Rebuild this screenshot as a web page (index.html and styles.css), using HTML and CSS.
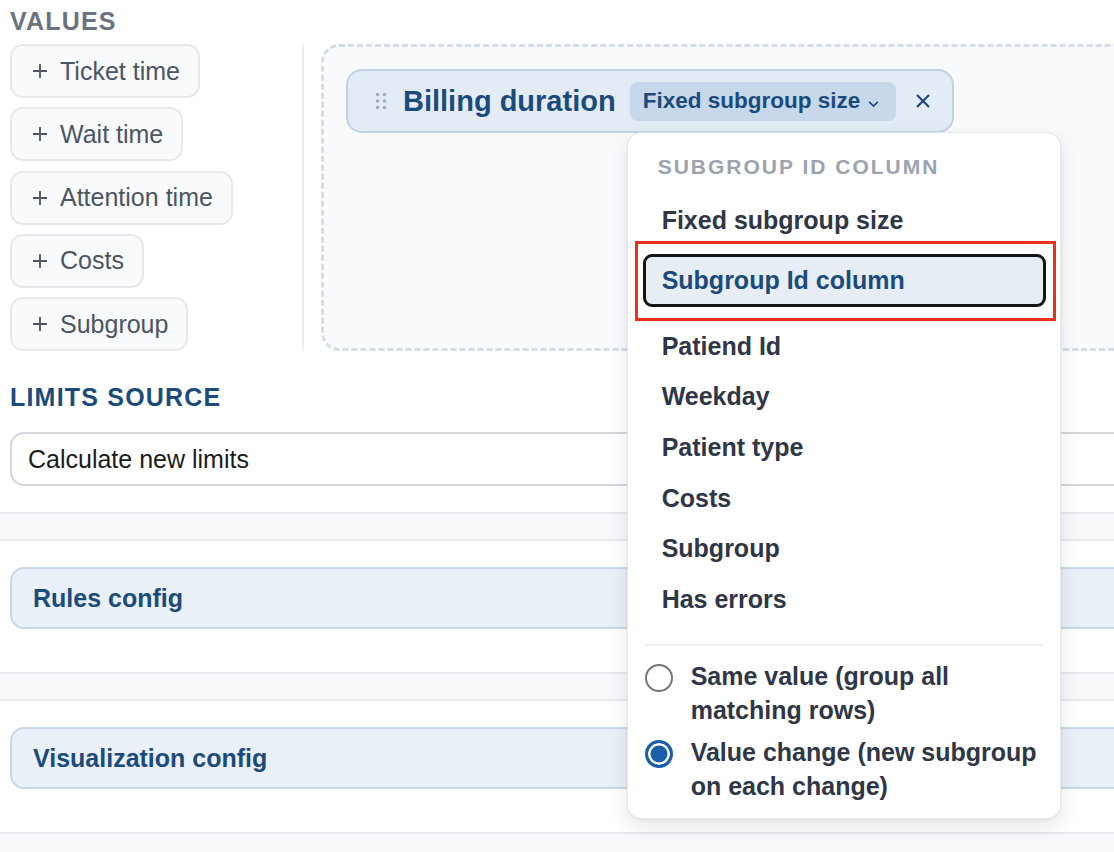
FILE: index.html
```html
<!DOCTYPE html>
<html lang="en">
<head>
    <meta charset="UTF-8">
    <meta name="viewport" content="width=device-width, initial-scale=1.0">
    <title>Chart config</title>
    <link rel="stylesheet" href="styles.css">
</head>
<body>
    <div class="page">
        <section class="panel panel-main">
            <h2 class="section-label">Values</h2>
            <div class="values-body">
                <div class="field-list">
                    <button class="field-btn"><svg viewBox="0 0 16 16"><path d="M8 1v14M1 8h14"/></svg>Ticket time</button>
                    <button class="field-btn"><svg viewBox="0 0 16 16"><path d="M8 1v14M1 8h14"/></svg>Wait time</button>
                    <button class="field-btn"><svg viewBox="0 0 16 16"><path d="M8 1v14M1 8h14"/></svg>Attention time</button>
                    <button class="field-btn"><svg viewBox="0 0 16 16"><path d="M8 1v14M1 8h14"/></svg>Costs</button>
                    <button class="field-btn"><svg viewBox="0 0 16 16"><path d="M8 1v14M1 8h14"/></svg>Subgroup</button>
                </div>
                <div class="divider"></div>
                <div class="dropzone">
                    <div class="value-chip">
                        <svg class="drag-handle" viewBox="0 0 12 18">
                            <circle cx="2.5" cy="2.5" r="1.8"/><circle cx="9.5" cy="2.5" r="1.8"/>
                            <circle cx="2.5" cy="9" r="1.8"/><circle cx="9.5" cy="9" r="1.8"/>
                            <circle cx="2.5" cy="15.5" r="1.8"/><circle cx="9.5" cy="15.5" r="1.8"/>
                        </svg>
                        <span class="value-name">Billing duration</span>
                        <div class="mode-select">
                            <button class="mode-btn">Fixed subgroup size <svg viewBox="0 0 12 7"><path d="M1 1l5 5 5-5"/></svg></button>
                            <div class="menu">
                                <div class="menu-header">SUBGROUP ID COLUMN</div>
                                <div class="menu-item">Fixed subgroup size</div>
                                <div class="focus-mark">
                                    <div class="menu-item focused">Subgroup Id column</div>
                                </div>
                                <div class="menu-item">Patiend Id</div>
                                <div class="menu-item">Weekday</div>
                                <div class="menu-item">Patient type</div>
                                <div class="menu-item">Costs</div>
                                <div class="menu-item">Subgroup</div>
                                <div class="menu-item">Has errors</div>
                                <div class="menu-divider"></div>
                                <div class="radio-group">
                                    <label class="radio-option"><span class="radio"></span><span>Same value (group all matching rows)</span></label>
                                    <label class="radio-option"><span class="radio checked"></span><span>Value change (new subgroup on each change)</span></label>
                                </div>
                            </div>
                        </div>
                        <button class="remove-btn"><svg viewBox="0 0 16 16"><path d="M2 2l12 12M14 2L2 14"/></svg></button>
                    </div>
                </div>
            </div>
            <h2 class="section-label limits">Limits source</h2>
            <div class="select-box">Calculate new limits</div>
        </section>
        <section class="panel">
            <div class="config-card">Rules config</div>
        </section>
        <section class="panel">
            <div class="config-card">Visualization config</div>
        </section>
    </div>
</body>
</html>
```

FILE: styles.css
```css
* {
    box-sizing: border-box;
}
html, body {
    margin: 0;
}
body {
    font-family: "Liberation Sans", Arial, sans-serif;
    background: #f8f9fb;
    height: 852px;
    overflow: hidden;
}
.page {
    width: 1160px;
}
.panel {
    background: #fff;
    border-bottom: 2px solid #e6e8ec;
    padding: 0 10px;
}
.panel + .panel {
    margin-top: 25px;
    border-top: 2px solid #e6e8ec;
    padding-top: 26px;
    padding-bottom: 43px;
}
.panel-main {
    position: relative;
    z-index: 2;
    padding-top: 7px;
    padding-bottom: 26px;
}
.section-label {
    margin: 0;
    font-size: 25px;
    line-height: 28px;
    font-weight: 700;
    letter-spacing: 1.2px;
    text-transform: uppercase;
    color: #6b7280;
}
.section-label.limits {
    margin-top: 32px;
    color: #1b4b7d;
}
.values-body {
    display: flex;
    margin-top: 9px;
}
.field-list {
    width: 280px;
    display: flex;
    flex-direction: column;
    align-items: flex-start;
    gap: 9.25px;
}
.field-btn {
    display: inline-flex;
    align-items: center;
    height: 54px;
    padding: 0 18px 0 20px;
    border: 2px solid #e6e8eb;
    border-radius: 13px;
    background: #f9fafb;
    color: #4b5563;
    font-family: inherit;
    font-size: 25px;
}
.field-btn svg {
    width: 16px;
    height: 16px;
    margin-right: 12px;
    stroke: #4b5563;
    stroke-width: 1.8;
    fill: none;
}
.divider {
    width: 2px;
    background: #eceef1;
    margin: 0 17px 0 12px;
}
.dropzone {
    flex: 1;
    border: 3px dashed #d6dde6;
    border-radius: 18px;
    background: #f8fafc;
    padding: 22px;
}
.value-chip {
    display: inline-flex;
    align-items: center;
    height: 64px;
    padding: 0 21px 0 27px;
    border: 2px solid #bfd2e6;
    border-radius: 16px;
    background: #e3ebf4;
}
.drag-handle {
    width: 12px;
    height: 18px;
    fill: #9bb0c6;
}
.value-name {
    margin-left: 16px;
    font-size: 29px;
    font-weight: 700;
    color: #1b4b7d;
}
.mode-select {
    position: relative;
    margin-left: 14px;
}
.mode-btn {
    display: flex;
    align-items: center;
    height: 39px;
    padding: 0 17px 0 13px;
    border: none;
    border-radius: 8px;
    background: #c6d8ea;
    color: #1b4b7d;
    font-family: inherit;
    font-size: 22.5px;
    font-weight: 700;
}
.mode-btn svg {
    width: 11px;
    height: 6px;
    margin: 6px 0 0 8px;
    stroke: #1b4b7d;
    stroke-width: 1.8;
    fill: none;
}
.remove-btn {
    width: 17px;
    height: 17px;
    margin-left: 18px;
    padding: 0;
    border: none;
    background: none;
}
.remove-btn svg {
    width: 16px;
    height: 16px;
    stroke: #1b4b7d;
    stroke-width: 2.2;
    fill: none;
}
.menu {
    position: absolute;
    left: -3px;
    top: 50px;
    width: 434px;
    padding: 22px 0 15px;
    background: #fff;
    border: 1px solid #e4e7eb;
    border-radius: 14px;
    box-shadow: 0 8px 20px rgba(15, 23, 42, 0.1), 0 1px 3px rgba(15, 23, 42, 0.06);
}
.menu-header {
    margin: 0 0 17px 30px;
    font-size: 21px;
    line-height: 24px;
    font-weight: 700;
    letter-spacing: 2px;
    color: #9ca3af;
}
.menu-item {
    display: flex;
    align-items: center;
    height: 50.6px;
    margin: 0 14px 0 15px;
    padding: 0 19px;
    font-size: 25px;
    font-weight: 700;
    color: #2f3747;
}
.focus-mark {
    margin: -5px 4px 0 7px;
    padding: 10px 7px 11px 5px;
    border: 3px solid #e8321c;
}
.menu-item.focused {
    height: 53px;
    margin: 0;
    padding-left: 16px;
    border: 3px solid #161616;
    border-radius: 9px;
    background: #e6edf5;
    color: #1b4b7d;
}
.menu-divider {
    height: 2px;
    margin: 19px 17px 0;
    background: #eef0f2;
}
.radio-group {
    margin-top: 13px;
    padding: 0 14px 0 17px;
}
.radio-option {
    display: flex;
    gap: 18px;
    font-size: 25px;
    line-height: 34px;
    font-weight: 700;
    color: #2f3747;
}
.radio-option + .radio-option {
    margin-top: 8px;
}
.radio {
    flex: none;
    width: 28px;
    height: 28px;
    margin-top: 5px;
    border: 2px solid #767676;
    border-radius: 50%;
    background: #fff;
}
.radio.checked {
    border: 3px solid #1a5fa8;
    background: #1a5fa8;
    box-shadow: inset 0 0 0 2.5px #fff;
}
.select-box {
    display: flex;
    align-items: center;
    height: 54px;
    margin-top: 21px;
    padding-left: 16px;
    border: 2px solid #d3d7dd;
    border-radius: 14px;
    background: #fff;
    font-size: 25px;
    color: #1a1a1a;
}
.config-card {
    display: flex;
    align-items: center;
    height: 62px;
    padding-left: 21px;
    border: 2px solid #c9d9e9;
    border-radius: 14px;
    background: #eaf0f7;
    font-size: 25px;
    font-weight: 700;
    color: #1b4b7d;
}
```
